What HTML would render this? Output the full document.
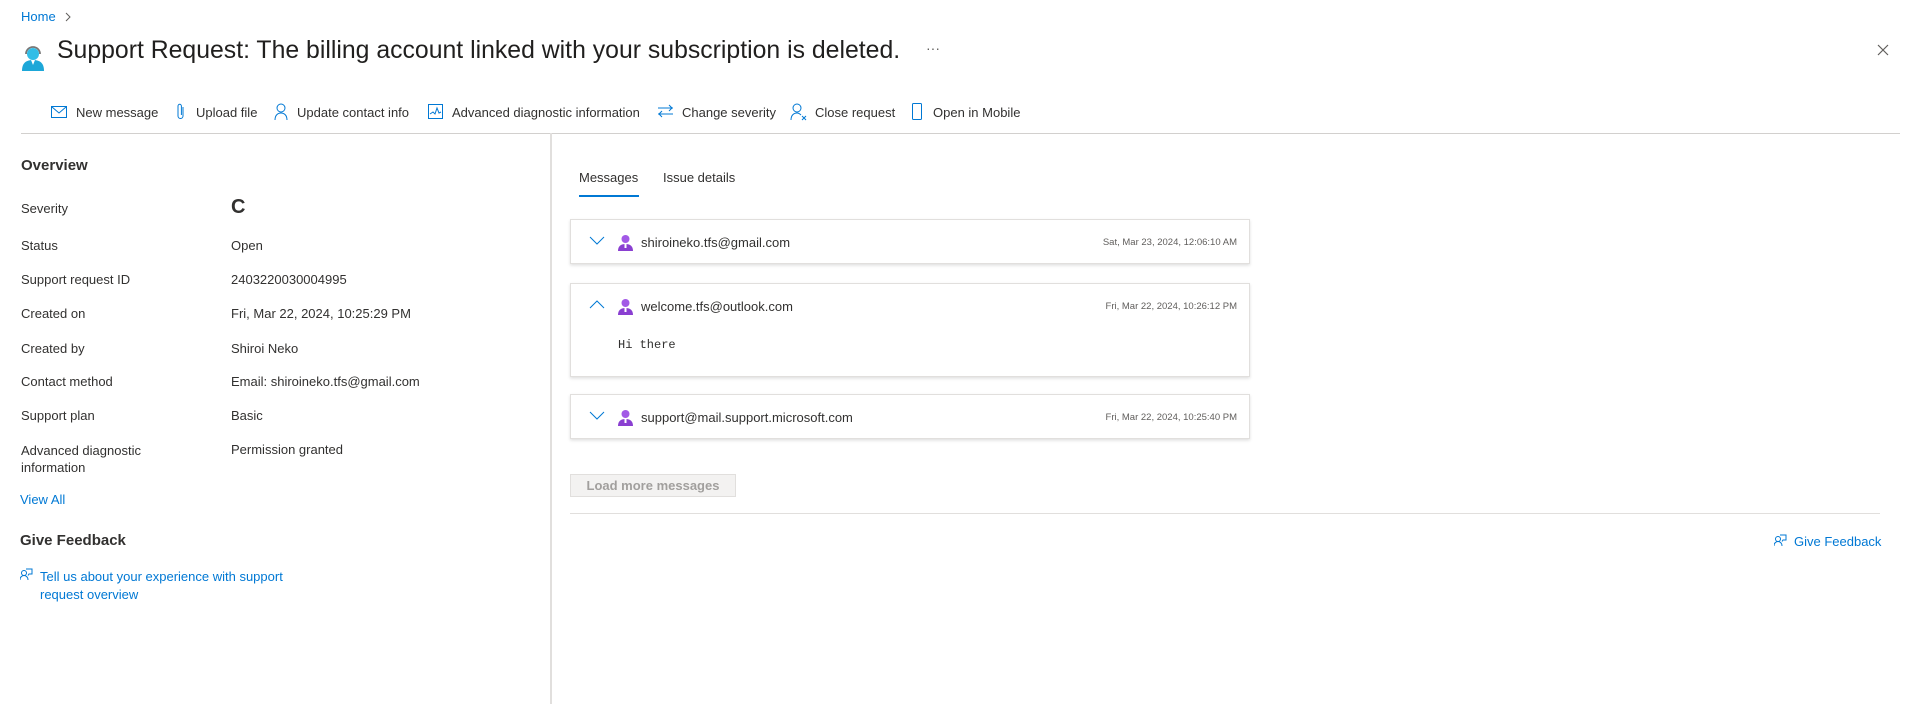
<!DOCTYPE html>
<html><head><meta charset="utf-8"><style>
*{margin:0;padding:0;box-sizing:border-box}
body{width:1919px;height:704px;background:#fff;font-family:"Liberation Sans",sans-serif;color:#323130;position:relative;overflow:hidden;font-size:13px}
.a{position:absolute;white-space:nowrap}
.blue{color:#0078d4}
.tb{position:absolute;top:105px;font-size:13px;color:#323130}
.ic{position:absolute}
.lbl{position:absolute;left:21px;font-size:13px}
.val{position:absolute;left:231px;font-size:13px}
.card{position:absolute;left:570px;width:680px;background:#fff;border:1px solid #e1dfdd;box-shadow:0 1.5px 3px rgba(0,0,0,.13)}
.em{position:absolute;left:70px;font-size:13px;color:#323130}
.dt{position:absolute;right:12px;font-size:9.5px;color:#605e5c}
</style></head><body>
<div class="a blue" style="left:21px;top:9px;font-size:13px">Home</div>
<svg class="ic" style="left:64px;top:12px" width="8" height="10"><path d="M2 1l4 4-4 4" fill="none" stroke="#605e5c" stroke-width="1"/></svg>
<svg class="ic" style="left:21px;top:43px" width="24" height="28" viewBox="0 0 24 28"><path d="M5 11a7 7 0 0 1 14 0" fill="none" stroke="#777" stroke-width="1.8"/><circle cx="12" cy="11" r="6" fill="#32bde6"/><path d="M1 28c0-8 4-11 11-11s11 3 11 11z" fill="#1da7d8"/><path d="M10 17h4l-2 5z" fill="#fff"/></svg>
<div class="a" style="left:57px;top:37px;font-size:24.8px;color:#201f1e">Support Request: The billing account linked with your subscription is deleted.</div>
<div class="a" style="left:926px;top:40px;font-size:14px;color:#605e5c">···</div>
<svg class="ic" style="left:1877px;top:44px" width="12" height="12"><path d="M1 1l10 10M11 1L1 11" stroke="#605e5c" stroke-width="1.2"/></svg>

<svg class="ic" style="left:51px;top:106px" width="16" height="12"><rect x=".5" y=".5" width="15" height="11" fill="none" stroke="#0078d4"/><path d="M1 1l7 6 7-6" fill="none" stroke="#0078d4"/></svg>
<div class="tb" style="left:76px">New message</div>
<svg class="ic" style="left:176px;top:103px" width="10" height="17"><path d="M7 4v9a2.5 2.5 0 0 1-5 0V3a1.7 1.7 0 0 1 3.4 0v9" fill="none" stroke="#0078d4"/></svg>
<div class="tb" style="left:196px">Upload file</div>
<svg class="ic" style="left:274px;top:103px" width="14" height="17"><circle cx="7" cy="5" r="4" fill="none" stroke="#0078d4"/><path d="M1 17c0-5 3-7 6-7s6 2 6 7" fill="none" stroke="#0078d4"/></svg>
<div class="tb" style="left:297px">Update contact info</div>
<svg class="ic" style="left:428px;top:104px" width="15" height="15"><rect x=".5" y=".5" width="14" height="14" fill="none" stroke="#0078d4"/><path d="M2 10l3-2 2 2 2-6 2 5 2-1" fill="none" stroke="#0078d4"/></svg>
<div class="tb" style="left:452px">Advanced diagnostic information</div>
<svg class="ic" style="left:657px;top:104px" width="17" height="14"><path d="M1 4h15M12 1l3 3-3 3M16 10H1M5 7l-3 3 3 3" fill="none" stroke="#0078d4"/></svg>
<div class="tb" style="left:682px">Change severity</div>
<svg class="ic" style="left:790px;top:103px" width="18" height="19"><circle cx="7" cy="5" r="4" fill="none" stroke="#0078d4"/><path d="M1 17c0-5 3-7 6-7 2 0 3 1 4 2" fill="none" stroke="#0078d4"/><path d="M12 13l4 4M16 13l-4 4" stroke="#0078d4"/></svg>
<div class="tb" style="left:815px">Close request</div>
<svg class="ic" style="left:912px;top:103px" width="10" height="17"><rect x=".5" y=".5" width="9" height="16" rx="1" fill="none" stroke="#0078d4"/></svg>
<div class="tb" style="left:933px">Open in Mobile</div>
<div class="a" style="left:21px;top:133px;width:1879px;height:1px;background:#d2d0ce"></div>
<div class="a" style="left:550px;top:133px;width:2px;height:571px;background:#e1dfdd"></div>

<div class="a" style="left:21px;top:157px;font-size:15px;font-weight:bold;color:#323130">Overview</div>
<div class="lbl" style="top:201px">Severity</div><div class="val" style="top:196px;font-size:20px;font-weight:bold">C</div>
<div class="lbl" style="top:238px">Status</div><div class="val" style="top:238px">Open</div>
<div class="lbl" style="top:272px">Support request ID</div><div class="val" style="top:272px">2403220030004995</div>
<div class="lbl" style="top:306px">Created on</div><div class="val" style="top:306px">Fri, Mar 22, 2024, 10:25:29 PM</div>
<div class="lbl" style="top:341px">Created by</div><div class="val" style="top:341px">Shiroi Neko</div>
<div class="lbl" style="top:374px">Contact method</div><div class="val" style="top:374px">Email: shiroineko.tfs@gmail.com</div>
<div class="lbl" style="top:408px">Support plan</div><div class="val" style="top:408px">Basic</div>
<div class="lbl" style="top:442px;line-height:17px">Advanced diagnostic<br>information</div><div class="val" style="top:442px">Permission granted</div>
<div class="a blue" style="left:20px;top:492px">View All</div>
<div class="a" style="left:20px;top:532px;font-size:15px;font-weight:bold">Give Feedback</div>
<svg class="ic" style="left:20px;top:568px" width="13" height="13"><circle cx="4" cy="5" r="2.5" fill="none" stroke="#0078d4"/><path d="M0 12c0-3 2-4.5 4-4.5s4 1.5 4 4.5" fill="none" stroke="#0078d4"/><path d="M6 1h6v5H9l-1 1.5" fill="none" stroke="#0078d4"/></svg>
<div class="a blue" style="left:40px;top:568px;line-height:18px">Tell us about your experience with support<br>request overview</div>

<div class="a" style="left:579px;top:170px;font-size:13px">Messages</div>
<div class="a" style="left:579px;top:195px;width:60px;height:2px;background:#0078d4"></div>
<div class="a" style="left:663px;top:170px;font-size:13px">Issue details</div>

<div class="card" style="top:219px;height:45px">
<svg class="ic" style="left:18px;top:16px" width="16" height="9"><path d="M1 1l7 7 7-7" fill="none" stroke="#0078d4"/></svg>
<svg class="ic" style="left:46px;top:14px" width="17" height="17"><circle cx="8.5" cy="5" r="4" fill="#a259e6"/><path d="M1 17c0-5 3-7 7.5-7s7.5 2 7.5 7z" fill="#8a3fd1"/><path d="M7.5 10h2v4h-2z" fill="#fff"/></svg>
<div class="em" style="top:15px">shiroineko.tfs@gmail.com</div>
<div class="dt" style="top:17px">Sat, Mar 23, 2024, 12:06:10 AM</div>
</div>
<div class="card" style="top:283px;height:94px">
<svg class="ic" style="left:18px;top:16px" width="16" height="9"><path d="M1 8l7-7 7 7" fill="none" stroke="#0078d4"/></svg>
<svg class="ic" style="left:46px;top:14px" width="17" height="17"><circle cx="8.5" cy="5" r="4" fill="#a259e6"/><path d="M1 17c0-5 3-7 7.5-7s7.5 2 7.5 7z" fill="#8a3fd1"/><path d="M7.5 10h2v4h-2z" fill="#fff"/></svg>
<div class="em" style="top:15px">welcome.tfs@outlook.com</div>
<div class="dt" style="top:17px">Fri, Mar 22, 2024, 10:26:12 PM</div>
<div class="a" style="left:47px;top:54px;font-family:'Liberation Mono',monospace;font-size:12px">Hi there</div>
</div>
<div class="card" style="top:394px;height:45px">
<svg class="ic" style="left:18px;top:16px" width="16" height="9"><path d="M1 1l7 7 7-7" fill="none" stroke="#0078d4"/></svg>
<svg class="ic" style="left:46px;top:14px" width="17" height="17"><circle cx="8.5" cy="5" r="4" fill="#a259e6"/><path d="M1 17c0-5 3-7 7.5-7s7.5 2 7.5 7z" fill="#8a3fd1"/><path d="M7.5 10h2v4h-2z" fill="#fff"/></svg>
<div class="em" style="top:15px">support@mail.support.microsoft.com</div>
<div class="dt" style="top:17px">Fri, Mar 22, 2024, 10:25:40 PM</div>
</div>
<div class="a" style="left:570px;top:474px;width:166px;height:23px;background:#f3f2f1;border:1px solid #e1dfdd;color:#a19f9d;font-size:13px;text-align:center;line-height:21px;font-weight:bold">Load more messages</div>
<div class="a" style="left:570px;top:513px;width:1310px;height:1px;background:#e1dfdd"></div>
<svg class="ic" style="left:1774px;top:534px" width="13" height="13"><circle cx="4" cy="5" r="2.5" fill="none" stroke="#0078d4"/><path d="M0 12c0-3 2-4.5 4-4.5s4 1.5 4 4.5" fill="none" stroke="#0078d4"/><path d="M6 1h6v5H9l-1 1.5" fill="none" stroke="#0078d4"/></svg>
<div class="a blue" style="left:1794px;top:534px">Give Feedback</div>
</body></html>
